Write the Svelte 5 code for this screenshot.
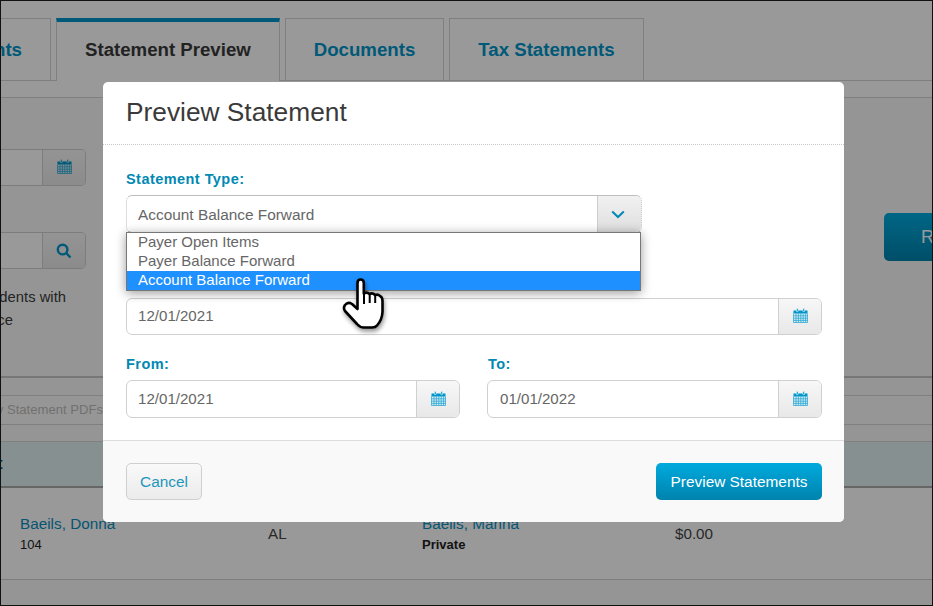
<script>
  const tabs = ['Documents', 'Tax Statements'];
  const options = ['Payer Open Items', 'Payer Balance Forward', 'Account Balance Forward'];
</script>

{#snippet calendar()}
  <svg class="cal" viewBox="0 0 15 15" aria-hidden="true">
    <path class="cal-body" d="M0.5 2.5h14v12h-14z" />
    <path class="cal-grid" d="M0.5 7.8h14M0.5 10.2h14M0.5 12.4h14M3 5.5v9M5.4 5.5v9M7.8 5.5v9M10.2 5.5v9M12.6 5.5v9M0.5 14.5h14M0.5 5.5v9M14.5 5.5v9" />
    <path class="cal-top" d="M0.5 2.5h14v3h-14z" />
    <path class="cal-ring" d="M3.5 0.6h1.6v3h-1.6zM9.9 0.6h1.6v3h-1.6z" />
  </svg>
{/snippet}

{#snippet dateField(value)}
  <div class="group">
    <div class="value">{value}</div>
    <div class="addon">{@render calendar()}</div>
  </div>
{/snippet}

<div class="screen">
  <div class="page">
    <nav class="tabs">
      <div class="tab first">Payments</div>
      <div class="tab active">Statement Preview</div>
      {#each tabs as t}
        <div class="tab">{t}</div>
      {/each}
    </nav>

    <section class="panel">
      <div class="filters">
        <div class="left">
          <div class="bg-group">
            <div class="addon">{@render calendar()}</div>
          </div>
          <div class="bg-group second">
            <div class="addon">
              <svg class="search" viewBox="0 0 16 16" aria-hidden="true">
                <circle cx="6.6" cy="6.6" r="4.8" />
                <path d="M10.2 10.2l4.3 4.3" />
              </svg>
            </div>
          </div>
          <div class="note">
            <span class="n1">Only Show Residents with</span>
            <span class="n2">Balance</span>
          </div>
        </div>
        <button class="run">Run</button>
      </div>

      <div class="toolbar">
        <div class="pdf">Filter by Statement PDFs</div>
      </div>

      <div class="thead"><span>Resident</span></div>
      <div class="row">
        <div>
          <div class="link">Baeils, Donna</div>
          <div class="sub">104</div>
        </div>
        <div>AL</div>
        <div>
          <div class="link">Baeils, Marina</div>
          <div class="sub bold">Private</div>
        </div>
        <div>$0.00</div>
      </div>
    </section>
  </div>

  <div class="backdrop"></div>

  <div class="modal">
    <header class="m-head"><h2>Preview Statement</h2></header>
    <div class="m-body">
      <div class="label">Statement Type:</div>
      <div class="select">
        <div class="sel-text">Account Balance Forward</div>
        <div class="sel-btn">
          <svg class="chev" viewBox="0 0 14 9" aria-hidden="true"><path d="M1.2 1.5L7 7l5.8-5.5" /></svg>
        </div>
        <ul class="list">
          {#each options as o, i}
            <li class:sel={i === 2}>{o}</li>
          {/each}
        </ul>
      </div>
      <div class="label hidden-label">Statement Date:</div>
      {@render dateField('12/01/2021')}
      <div class="split">
        <div>
          <div class="label">From:</div>
          {@render dateField('12/01/2021')}
        </div>
        <div class="to">
          <div class="label">To:</div>
          {@render dateField('01/01/2022')}
        </div>
      </div>
    </div>
    <footer class="m-foot">
      <button class="cancel">Cancel</button>
      <button class="primary">Preview Statements</button>
    </footer>
  </div>

  <svg class="hand" viewBox="0 0 70 70" aria-hidden="true">
    <path class="hand-fill" d="M27.5 18Q27.5 14.5 30.5 14.5Q33.8 14.5 33.8 18V28.5Q37 26.5 39.5 29Q42.5 27.3 45 30Q48 28.8 50 31Q52.5 32 52.5 36V47Q52 55 47 60.5Q45.5 62.5 42 62.5H34Q30 62.5 27 59L15 46Q13 43 15 40Q18 36.5 22 39L27.5 44Z" />
    <path class="hand-line" d="M34 29V39M39.7 30V38M45.2 31V38" />
  </svg>
</div>

<style>
  :global(body) {
    margin: 0;
    font-family: "Liberation Sans", Arial, sans-serif;
  }
  .screen {
    position: relative;
    width: 933px;
    height: 606px;
    box-sizing: border-box;
    border: 1px solid #111;
    overflow: hidden;
    background: #fff;
    font-size: 14px;
    color: #333;
  }
  .page {
    padding-top: 17px;
  }
  .tabs {
    display: flex;
    gap: 5px;
    height: 63px;
    box-sizing: border-box;
    border-bottom: 1px solid #d4d4d4;
  }
  .tab {
    flex: none;
    height: 62px;
    box-sizing: border-box;
    border: 1px solid #d4d4d4;
    border-bottom: 0;
    padding: 0 28px;
    display: flex;
    align-items: center;
    font-size: 18.65px;
    font-weight: 700;
    color: #0095c8;
  }
  .first {
    width: 150px;
    margin-left: -100px;
    justify-content: flex-end;
  }
  .active {
    height: 63px;
    border-top: 4px solid #0095c8;
    background: #fff;
    color: #3a3a3a;
    padding-bottom: 3px;
  }
  .panel {
    margin-top: 16px;
    border-top: 1px solid #d4d4d4;
    background: #f9f9f9;
    height: 507px;
  }
  .filters {
    display: flex;
    justify-content: space-between;
    height: 278px;
    border-bottom: 2px solid #c6c6c6;
  }
  .left {
    padding-top: 51px;
    width: 85px;
  }
  .bg-group {
    height: 37px;
    box-sizing: border-box;
    border: 1px solid #cfcfcf;
    border-left: 0;
    border-radius: 0 5px 5px 0;
    background: #fff;
    display: flex;
    justify-content: flex-end;
  }
  .second {
    margin-top: 46px;
  }
  .bg-group .addon {
    width: 43px;
    flex: none;
    border-radius: 0 4px 4px 0;
  }
  .note {
    margin-top: 17px;
    display: flex;
    flex-direction: column;
    width: 65px;
    line-height: 23px;
    white-space: nowrap;
    font-size: 14.8px;
    color: #3c3c3c;
  }
  .n1,
  .n2 {
    display: flex;
    justify-content: flex-end;
  }
  .n2 {
    width: 12px;
  }
  .run {
    margin-top: 115px;
    margin-right: -40px;
    width: 88px;
    height: 48px;
    border: 0;
    border-radius: 5px;
    background: linear-gradient(#00aade, #0083ad);
    color: #fff;
    font: 18px "Liberation Sans", Arial, sans-serif;
    padding: 0 0 0 37px;
    text-align: left;
  }
  .toolbar {
    margin-top: 17px;
    height: 28px;
    border-top: 1px solid #d4d4d4;
    border-bottom: 1px solid #d4d4d4;
    display: flex;
    align-items: center;
    background: #fbfbfb;
  }
  .pdf {
    flex: none;
    width: 102px;
    display: flex;
    justify-content: flex-end;
    margin-top: -2px;
    font-size: 13.1px;
    color: #bbb;
    white-space: nowrap;
  }
  .thead {
    margin-top: 16px;
    height: 47px;
    box-sizing: border-box;
    border-top: 1px solid #d4d4d4;
    border-bottom: 2px solid #aaa;
    background: #dff0f0;
    display: flex;
    align-items: center;
    font-weight: 700;
    font-size: 16px;
    color: #0b4f73;
  }
  .thead span {
    margin-left: -66px;
  }
  .row {
    display: grid;
    grid-template-columns: 248px 154px 253px 1fr;
    align-items: center;
    padding-left: 19px;
    height: 92px;
    box-sizing: border-box;
    border-bottom: 1px solid #d0d0d0;
    background: #fff;
    font-size: 15.2px;
    color: #444;
  }
  .link {
    color: #0a8ebd;
    font-size: 15.3px;
    line-height: 17px;
  }
  .sub {
    margin-top: 5px;
    font-size: 13px;
    line-height: 15px;
    color: #222;
  }
  .bold {
    font-weight: 700;
  }

  .backdrop {
    position: absolute;
    inset: 0;
    background: rgba(0, 0, 0, 0.4);
  }
  .modal {
    position: absolute;
    left: 102px;
    top: 81px;
    width: 741px;
    height: 440px;
    background: #fff;
    border-radius: 5px;
    display: flex;
    flex-direction: column;
  }
  .m-head {
    height: 63px;
    box-sizing: border-box;
    border-bottom: 1px dotted #c8c8c8;
    padding: 0 23px 2px;
    display: flex;
    align-items: center;
  }
  h2 {
    margin: 0;
    font-size: 26.3px;
    font-weight: 400;
    color: #3a3a3a;
  }
  .m-body {
    flex: 1;
    padding: 0 22px 0 23px;
  }
  .label {
    color: #0089b3;
    font-weight: 700;
    font-size: 14.5px;
    letter-spacing: 0.45px;
    line-height: 16px;
  }
  .m-body > .label:first-child {
    margin-top: 26px;
    margin-bottom: 8px;
  }
  .hidden-label {
    margin-top: 40px;
    margin-bottom: 9px;
  }
  .select {
    position: relative;
    display: flex;
    width: 516px;
    height: 38px;
    box-sizing: border-box;
    border: 1px solid #bdbdbd;
    border-left-style: dotted;
    border-right-style: dotted;
    border-radius: 6px;
    background: #fff;
  }
  .sel-text {
    flex: 1;
    padding-left: 11px;
    line-height: 38px;
    font-size: 15.4px;
    color: #666;
  }
  .sel-btn {
    width: 44px;
    padding-right: 3px;
    box-sizing: border-box;
    border-left: 1px solid #ccc;
    border-radius: 0 5px 5px 0;
    background: linear-gradient(#f1f1f1, #dedede);
    display: flex;
    align-items: center;
    justify-content: center;
  }
  .chev {
    width: 14px;
    height: 9px;
    fill: none;
    stroke: #0089b3;
    stroke-width: 2;
  }
  .list {
    position: absolute;
    left: -1px;
    top: 36px;
    width: 515px;
    margin: 0;
    padding: 0;
    list-style: none;
    box-sizing: border-box;
    border: 1px solid #777;
    background: #fff;
    box-shadow: 0 2px 10px rgba(0, 0, 0, 0.4);
    font-size: 15px;
    color: #666;
  }
  .list li {
    height: 19px;
    line-height: 17px;
    padding-left: 11px;
  }
  .list li.sel {
    background: #1e90ff;
    color: #fff;
  }
  .group {
    display: flex;
    height: 37px;
    box-sizing: border-box;
    border: 1px solid #d0d0d0;
    border-radius: 6px;
    background: #fff;
  }
  .value {
    flex: 1;
    padding-left: 11px;
    line-height: 33px;
    font-size: 15.1px;
    color: #666;
  }
  .addon {
    width: 43px;
    flex: none;
    box-sizing: border-box;
    border-left: 1px solid #d0d0d0;
    border-radius: 0 5px 5px 0;
    background: linear-gradient(#f7f7f7, #e8e8e8);
    display: flex;
    align-items: center;
    justify-content: center;
  }
  .cal {
    width: 15px;
    height: 15px;
    margin-top: -2px;
  }
  .cal-body {
    fill: #d2ecf6;
  }
  .cal-top {
    fill: #0095c8;
  }
  .cal-grid {
    fill: none;
    stroke: #1fa2cf;
    stroke-width: 0.7;
  }
  .cal-ring {
    fill: #0095c8;
    stroke: #fff;
    stroke-width: 0.5;
  }
  .search {
    width: 16px;
    height: 16px;
    fill: none;
    stroke: #0095c8;
    stroke-width: 2.4;
  }
  .split {
    display: grid;
    grid-template-columns: 334px 335px;
    gap: 27px;
    margin-top: 21px;
  }
  .split .label {
    margin-bottom: 8px;
  }
  .split .group {
    height: 38px;
  }
  .split .value {
    line-height: 36px;
  }
  .to .label {
    padding-left: 1px;
  }
  .to .value {
    padding-left: 12px;
  }
  .m-foot {
    height: 82px;
    box-sizing: border-box;
    border-top: 1px solid #dcdcdc;
    border-radius: 0 0 5px 5px;
    background: #f9f9f9;
    padding: 22px 22px 0 23px;
    display: flex;
    justify-content: space-between;
    align-items: flex-start;
  }
  .cancel,
  .primary {
    height: 37px;
    font: 15.4px "Liberation Sans", Arial, sans-serif;
    border-radius: 5px;
    padding: 0;
  }
  .cancel {
    width: 76px;
    border: 1px solid #cfcfcf;
    background: linear-gradient(#f9f9f9, #ebebeb);
    color: #1e96bc;
  }
  .primary {
    width: 166px;
    border: 0;
    background: linear-gradient(#00aade, #0083ad);
    color: #fff;
  }
  .hand {
    position: absolute;
    left: 329px;
    top: 264px;
    width: 70px;
    height: 70px;
    filter: drop-shadow(1px 3px 2px rgba(0, 0, 0, 0.4));
  }
  .hand-fill {
    fill: #fff;
    stroke: #000;
    stroke-width: 2.6;
    stroke-linejoin: round;
  }
  .hand-line {
    fill: none;
    stroke: #000;
    stroke-width: 2;
  }
</style>
